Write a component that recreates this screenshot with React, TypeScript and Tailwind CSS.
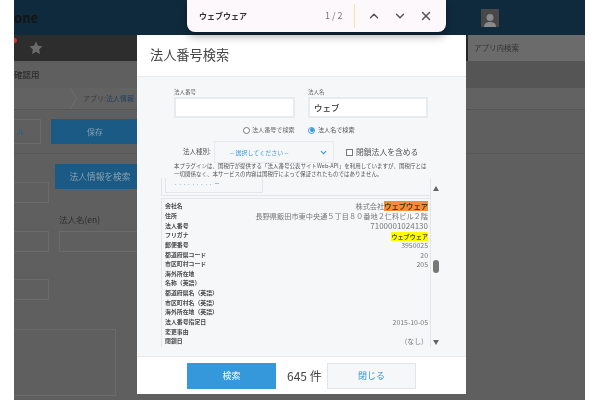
import { ChevronDown, ChevronUp, X } from "lucide-react";

const rows: [string, string][] = [
  ["会社名", "株式会社"],
  ["住所", "長野県飯田市東中央通５丁目８０番地２仁科ビル２階"],
  ["法人番号", "7100001024130"],
  ["フリガナ", ""],
  ["郵便番号", "3950025"],
  ["都道府県コード", "20"],
  ["市区町村コード", "205"],
  ["海外所在地", ""],
  ["名称（英語）", ""],
  ["都道府県名（英語）", ""],
  ["市区町村名（英語）", ""],
  ["海外所在地（英語）", ""],
  ["法人番号指定日", "2015-10-05"],
  ["変更事由", ""],
  ["閉鎖日", "（なし）"],
];

function ResultRow({ label, value, index }: { label: string; value: string; index: number }) {
  return (
    <div className="flex h-[9.64px] items-center justify-between">
      <span className="text-[5.9px] font-bold text-[#4a4a4a]">{label}</span>
      <span className={index === 2 ? "text-[8px] text-[#777]" : index < 2 ? "text-[7.2px] text-[#777]" : "text-[6.9px] text-[#777]"}>
        {value}
        {index === 0 && <span className="bg-[#f98b34] text-[7.3px] font-bold text-[#4a3a20]">ウェブウェア</span>}
        {index === 3 && <span className="bg-[#fdfd00] text-[6.1px] font-bold text-[#55551a]">ウェブウェア</span>}
      </span>
    </div>
  );
}

function FindBar() {
  return (
    <div className="absolute left-[187px] top-0 z-20 flex h-[32px] w-[259px] items-center rounded-b-lg bg-[#fdf8fc] pl-[12px] shadow-[0_4px_10px_rgba(0,0,0,0.35)]">
      <span className="w-[126px] text-[8px] font-bold text-[#333]">ウェブウェア</span>
      <span className="w-[29px] text-[9px] text-[#777]">1 / 2</span>
      <span className="h-[24px] w-[1px] bg-[#f6e3a8]" />
      <ChevronUp className="ml-[12px] text-[#555]" size={14} strokeWidth={2.5} />
      <ChevronDown className="ml-[12px] text-[#555]" size={14} strokeWidth={2.5} />
      <X className="ml-[12px] text-[#555]" size={14} strokeWidth={2.5} />
    </div>
  );
}

function Modal() {
  return (
    <div className="absolute left-[137px] top-[35px] z-10 flex h-[359px] w-[329px] flex-col bg-white">
      <div className="flex h-[41px] items-center pb-[2px] pl-[13px] text-[13.2px] text-[#444]">法人番号検索</div>
      <div className="flex h-[281px] flex-col border-y border-[#e8ebee] bg-[#f5f7f9]">
        <div className="flex gap-[13px] pl-[37px] pt-[10px]">
          <div className="w-[121px]">
            <div className="h-[10px] text-[5.5px] leading-[10px] text-[#666]">法人番号</div>
            <div className="h-[21px] border-2 border-[#e8ebee] bg-white" />
          </div>
          <div className="w-[120px]">
            <div className="h-[10px] text-[5.5px] leading-[10px] text-[#666]">法人名</div>
            <div className="h-[21px] border-2 border-[#e8ebee] bg-white pl-[4px] text-[8.5px] font-medium leading-[17px] text-[#333]">ウェブ</div>
          </div>
        </div>
        <div className="mt-[6px] flex h-[12px] items-center pl-[106px] text-[6.1px] text-[#666]">
          <span className="mr-[2px] h-[7px] w-[7px] rounded-full border border-[#777] bg-white" />
          <span className="w-[56px]">法人番号で検索</span>
          <span className="mr-[3px] flex h-[7px] w-[7px] items-center justify-center rounded-full border border-[#3498db] bg-white">
            <span className="h-[4px] w-[4px] rounded-full bg-[#3498db]" />
          </span>
          <span className="text-[#555]">法人名で検索</span>
        </div>
        <div className="mt-[5px] flex h-[22px] items-center pl-[46px]">
          <span className="w-[31px] text-[6.5px] text-[#555]">法人種別:</span>
          <div className="flex h-[22px] w-[120px] items-center justify-between border border-[#e8ebee] pl-[15px] pr-[5px] text-[6px] text-[#3498db]">
            <span>-- 選択してください --</span>
            <ChevronDown size={9} strokeWidth={3} />
          </div>
          <span className="ml-[12px] h-[7px] w-[7px] border border-[#777] bg-white" />
          <span className="ml-[3px] text-[7.8px] text-[#555]">閉鎖法人を含める</span>
        </div>
        <div className="-mt-[1px] pl-[37px] text-[5.5px] leading-[8px] text-[#555]">
          <p className="whitespace-nowrap">本プラグインは、国税庁が提供する「法人番号公表サイトWeb-API」を利用していますが、国税庁とは</p>
          <p className="whitespace-nowrap">一切関係なく、本サービスの内容は国税庁によって保証されたものではありません。</p>
        </div>
        <div className="ml-[24px] flex h-[169px] w-[280px]">
          <div className="flex w-[270px] flex-col border-r border-[#e3e6e9]">
            <div className="h-[18px] border-b border-l border-[#e3e6e9]">
              <div className="ml-[3px] h-[15px] w-[98px] overflow-hidden border-x border-b border-[#e3e6e9] pl-[9px] text-[5px] leading-[10px] tracking-[3px] text-[#3498db]">.........ー</div>
            </div>
            <div className="mt-[2px] h-[149px] border-l border-t border-[#e3e6e9] pl-[3px] pr-[2px] pt-[3px]">
              {rows.map(([label, value], i) => (
                <ResultRow key={label} label={label} value={value} index={i} />
              ))}
            </div>
          </div>
          <div className="relative flex w-[10px] flex-col items-center justify-between">
            <span className="mt-[8px] h-0 w-0 border-x-[3.5px] border-b-[5px] border-x-transparent border-b-[#666]" />
            <span className="absolute top-[82px] h-[13px] w-[6px] rounded-full bg-[#777]" />
            <span className="mb-[2px] h-0 w-0 border-x-[3.5px] border-t-[5px] border-x-transparent border-t-[#666]" />
          </div>
        </div>
      </div>
      <div className="flex flex-1 items-center pl-[50px]">
        <div className="flex h-[26px] w-[89px] items-center justify-center bg-[#3498db] text-[9px] text-white">検索</div>
        <span className="ml-[11px] w-[40px] text-[12px] text-[#444]">645 件</span>
        <div className="flex h-[26px] w-[89px] items-center justify-center border border-[#e3e6e9] bg-[#f5f7f9] text-[9px] text-[#3498db]">閉じる</div>
      </div>
    </div>
  );
}

export default function App() {
  return (
    <div className="relative h-[400px] w-[600px] overflow-hidden bg-white font-['Noto_Sans_CJK_JP','Noto_Sans',sans-serif] blur-[0.4px]">
      <div className="ml-[14px] flex h-[400px] w-[571px] flex-col bg-[#5f5f5f] text-[#2e2e2e]">
        {/* top bar */}
        <div className="flex h-[35px] items-center justify-between bg-[#0f2a3d]">
          <span className="text-[13px] font-bold text-[#141414]">one</span>
          <div className="mr-[86px] flex h-[18px] w-[18px] items-end justify-center bg-[#484848]">
            <svg width="14" height="14" viewBox="0 0 14 14" fill="#8a8a8a">
              <circle cx="7" cy="4.5" r="3.5" />
              <path d="M1 14c0-4 3-5 6-5s6 1 6 5z" />
            </svg>
          </div>
        </div>
        {/* nav bar */}
        <div className="flex h-[26px]">
          <div className="relative flex flex-1 items-center bg-[#2d2d2d] pl-[15px]">
            <span className="absolute left-0 top-[3px] h-[5px] w-[3px] rounded-r-full bg-[#c9342a]" />
            <svg width="14" height="14" viewBox="0 0 24 24" fill="#6b6b6b">
              <path d="M12 1l3.4 7.2 7.6 1-5.6 5.4 1.5 7.9L12 18.6l-6.9 3.9 1.5-7.9L1 9.2l7.6-1z" />
            </svg>
          </div>
          <div className="flex w-[119px] items-center border-l-2 border-[#262626] bg-[#6b6b6b] pl-[6px] text-[7.5px] text-[#333]">アプリ内検索</div>
        </div>
        <div className="flex h-[27px]">
          <div className="flex flex-1 items-center text-[8.5px] font-medium">確認用</div>
          <div className="w-[119px] bg-[#555]" />
        </div>
        {/* breadcrumb */}
        <div className="flex h-[22px] items-center border-b border-[#555] bg-[#626262] pl-[56px] text-[7px] text-[#3a3a3a]">
          <svg width="8" height="21" viewBox="0 0 8 21" fill="none" stroke="#6e6e6e" className="mr-[5px]">
            <path d="M0 0l7 10.5L0 21" />
          </svg>
          アプリ: <span className="text-[#24415c]">法人情報</span>
        </div>
        <div className="flex h-[44px] items-center justify-between border-b border-[#585858]">
          <div className="flex items-center">
            <div className="flex h-[25px] w-[27px] items-center border border-l-0 border-[#6a6a6a] pl-[3px] text-[8px] text-[#2c5f80]">ル</div>
            <div className="ml-[10px] flex h-[25px] w-[120px] items-center justify-center bg-[#1b5a84] pr-[32px] text-[8px] text-[#8aa0ae]">保存</div>
          </div>
        </div>
        <div className="ml-[41px] mt-[10px] flex h-[25px] w-[130px] items-center justify-center self-start bg-[#1b5a84] pr-[40px] text-[8.7px] text-[#8aa0ae]">法人情報を検索</div>
        <div className="-mt-[7px] h-[21px] w-[35px] border border-l-0 border-[#6a6a6a]" />
        <div className="mt-[9px] pl-[45px] text-[8.5px] leading-[14px]">法人名(en)</div>
        <div className="mt-[5px] flex gap-[10px]">
          <div className="h-[21px] w-[35px] border border-l-0 border-[#6a6a6a]" />
          <div className="h-[21px] w-[90px] border border-[#6a6a6a]" />
        </div>
        <div className="mt-[27px] h-[21px] w-[35px] border border-l-0 border-[#6a6a6a]" />
        <div className="mt-[29px] h-[67px] w-[102px] border border-l-0 border-[#6a6a6a]" />
      </div>
      <FindBar />
      <Modal />
    </div>
  );
}
